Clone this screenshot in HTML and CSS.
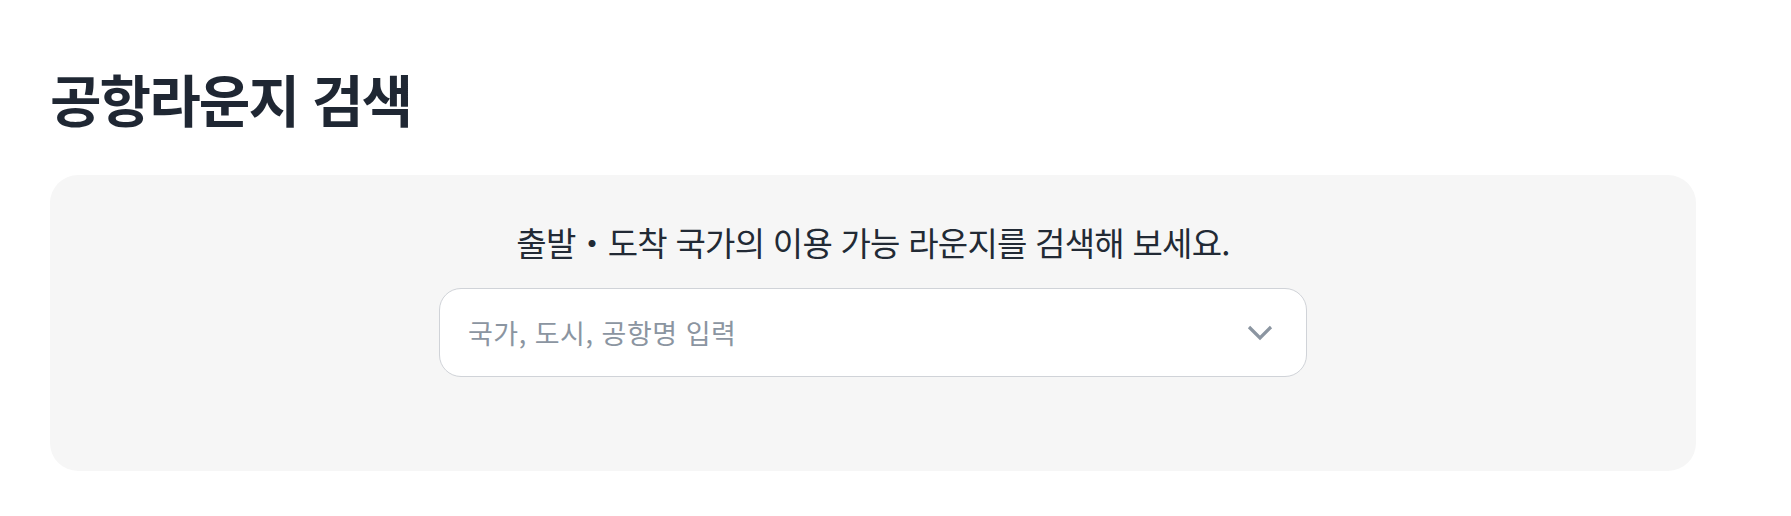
FILE: index.html
```html
<!DOCTYPE html>
<html lang="ko">
<head>
  <meta charset="UTF-8">
  <meta name="viewport" content="width=device-width, initial-scale=1.0">
  <title>공항라운지 검색</title>
  <link rel="stylesheet" href="styles.css">
</head>
<body>
  <div class="page">
    <h1 class="title">공항라운지 검색</h1>
    <div class="search-box">
      <p class="guide">출발・도착 국가의 이용 가능 라운지를 검색해 보세요.</p>
      <div class="select">
        <span class="placeholder">국가, 도시, 공항명 입력</span>
        <svg class="arrow" width="26" height="16" viewBox="0 0 26 16">
          <path d="M2 2 L13 13 L24 2" fill="none" stroke="#8b95a1" stroke-width="3.2"/>
        </svg>
      </div>
    </div>
  </div>
</body>
</html>
```

FILE: styles.css
```css
*{margin: 0; padding: 0; box-sizing: border-box;}
body{background: #fff; font-family: "Noto Sans CJK KR", "Noto Sans", sans-serif; color: #1f2733;}
.page{padding: 58px 95px 0 50px;}
.title{font-size: 56px; font-weight: 700; line-height: 80px; letter-spacing: -1.9px; color: #1f2733;}
.search-box{margin-top: 37px; height: 296px; background: #f6f6f6; border-radius: 28px; display: flex; flex-direction: column; align-items: center; padding-top: 44px;}
.guide{font-size: 33px; line-height: 46px; letter-spacing: -0.75px; color: #222a35;}
.select{margin-top: 23px; width: 868px; height: 89px; background: #fff; border: 1px solid #d0d3d8; border-radius: 22px; display: flex; align-items: center; justify-content: space-between; padding: 0 33px 0 28px;}
.placeholder{font-size: 27px; color: #8b95a1; letter-spacing: 0.5px;}
.arrow{display: block;}
```
